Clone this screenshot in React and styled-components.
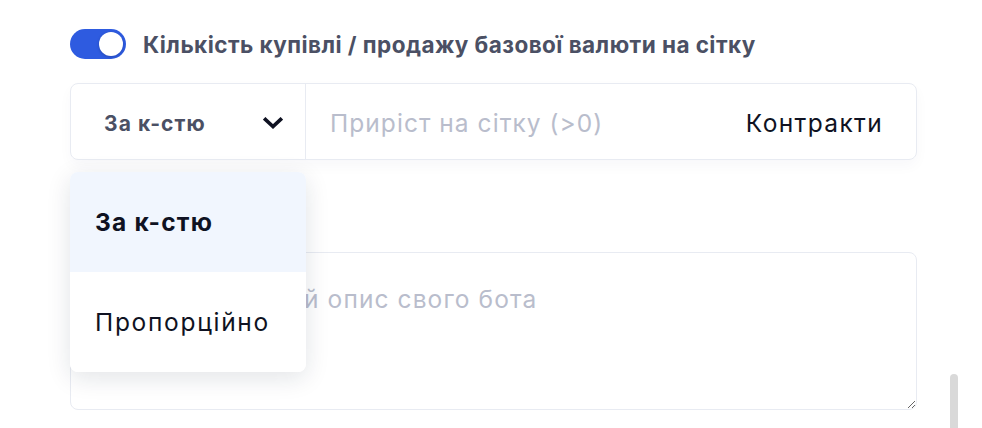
import React, { useState } from "react";
import styled, { createGlobalStyle } from "styled-components";

const Global = createGlobalStyle`
  html, body { margin: 0; padding: 0; background: #ffffff; }
  body { font-family: Inter, "Noto Sans", sans-serif; overflow: hidden; }
  * { box-sizing: border-box; }
`;

const Page = styled.div`
  position: relative;
  width: 982px;
  height: 428px;
  overflow: hidden;
  padding: 29px 65px 0 70px;
`;

const ToggleRow = styled.div`
  display: flex;
  align-items: center;
  gap: 17px;
  height: 30px;
`;

const Track = styled.button`
  position: relative;
  width: 56px;
  height: 30px;
  border: none;
  padding: 0;
  border-radius: 15px;
  background: ${(p) => (p.$on ? "#2e5be0" : "#d5d9e3")};
  cursor: pointer;
  flex-shrink: 0;
`;

const Knob = styled.span`
  position: absolute;
  top: 3px;
  left: ${(p) => (p.$on ? "29px" : "3px")};
  width: 24px;
  height: 24px;
  border-radius: 50%;
  background: #ffffff;
  box-shadow: 0 1px 3px rgba(10, 20, 60, 0.25);
`;

const ToggleLabel = styled.span`
  font-size: 22.5px;
  font-weight: 700;
  color: #4b5064;
  letter-spacing: 0.45px;
  white-space: nowrap;
`;

const Group = styled.div`
  position: relative;
  margin-top: 24px;
  height: 77px;
  display: flex;
  border: 1px solid #e8ebf2;
  border-radius: 8px;
  box-shadow: 0 6px 14px rgba(30, 40, 80, 0.03);
`;

const SelectBox = styled.div`
  width: 235px;
  flex-shrink: 0;
  display: flex;
  align-items: center;
  justify-content: space-between;
  padding: 3px 22px 0 33px;
  border-right: 1px solid #e8ebf2;
  cursor: pointer;
`;

const SelectText = styled.span`
  font-size: 21px;
  font-weight: 700;
  color: #4b5064;
  letter-spacing: 1.1px;
`;

const InputWrap = styled.div`
  flex: 1;
  display: flex;
  align-items: center;
  padding: 3px 33px 0 24px;
`;

const Input = styled.input`
  flex: 1;
  min-width: 0;
  border: none;
  outline: none;
  font-family: inherit;
  font-size: 24.5px;
  letter-spacing: 1.05px;
  color: #0f1222;
  background: transparent;
  padding: 0;
  &::placeholder { color: #b9bdcc; }
`;

const Unit = styled.span`
  font-size: 24.5px;
  letter-spacing: 1.35px;
  color: #0f1222;
`;

const TextArea = styled.textarea`
  display: block;
  width: 100%;
  height: 158px;
  margin-top: 92px;
  border: 1px solid #e8ebf2;
  border-radius: 8px;
  padding: 32px 22px;
  font-family: inherit;
  font-size: 24.5px;
  letter-spacing: 1.1px;
  line-height: 28px;
  color: #0f1222;
  outline: none;
  &::placeholder { color: #b9bdcc; }
`;

const Menu = styled.div`
  position: absolute;
  top: 88px;
  left: -1px;
  width: 236px;
  background: #ffffff;
  border-radius: 8px;
  overflow: hidden;
  box-shadow: 0 6px 24px rgba(20, 30, 60, 0.12);
  z-index: 5;
`;

const MenuItem = styled.div`
  height: 100px;
  display: flex;
  align-items: center;
  padding-left: 25px;
  font-size: 24.5px;
  letter-spacing: ${(p) => (p.$active ? "1.2px" : "1.7px")};
  font-weight: ${(p) => (p.$active ? 700 : 400)};
  color: #0f1222;
  background: ${(p) => (p.$active ? "#f1f6fe" : "#ffffff")};
  cursor: pointer;
`;

const Scrollbar = styled.div`
  position: absolute;
  left: 950px;
  top: 374px;
  width: 8px;
  height: 54px;
  border-radius: 4px 4px 0 0;
  background: #d9d9d9;
`;

const Chevron = () => (
  <svg width="20" height="12" viewBox="0 0 20 12" fill="none">
    <path d="M2.5 2.5 L10 9.5 L17.5 2.5" stroke="#0f1222" strokeWidth="3.6" strokeLinecap="square" strokeLinejoin="miter" />
  </svg>
);

export default function App() {
  const [on, setOn] = useState(true);
  const options = ["За к-стю", "Пропорційно"];
  const [value, setValue] = useState(options[0]);
  return (
    <Page>
      <Global />
      <ToggleRow>
        <Track $on={on} onClick={() => setOn(!on)}>
          <Knob $on={on} />
        </Track>
        <ToggleLabel>Кількість купівлі / продажу базової валюти на сітку</ToggleLabel>
      </ToggleRow>
      <Group>
        <SelectBox>
          <SelectText>{value}</SelectText>
          <Chevron />
        </SelectBox>
        <InputWrap>
          <Input placeholder="Приріст на сітку (>0)" />
          <Unit>Контракти</Unit>
        </InputWrap>
        <Menu>
          {options.map((o) => (
            <MenuItem key={o} $active={o === value} onClick={() => setValue(o)}>
              {o}
            </MenuItem>
          ))}
        </Menu>
      </Group>
      <TextArea placeholder="Введіть короткий опис свого бота" />
      <Scrollbar />
    </Page>
  );
}
